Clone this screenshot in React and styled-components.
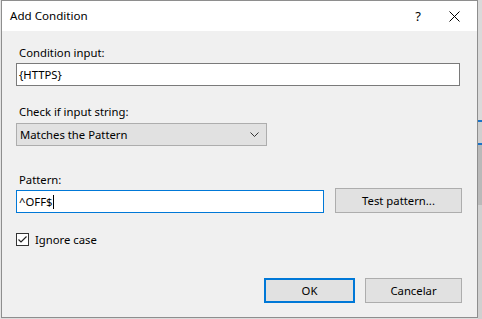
import React from "react";
import styled, { createGlobalStyle } from "styled-components";

const GlobalStyle = createGlobalStyle`
  html, body {
    margin: 0;
    padding: 0;
    background: #dcdcdc;
  }
  body {
    font-family: "Noto Sans", "Open Sans", sans-serif;
    font-size: 11.3px;
    color: #000;
  }
`;

const Screen = styled.div`
  display: flex;
  width: 482px;
  height: 319px;
  overflow: hidden;
`;

const Gutter = styled.div`
  width: 1px;
  background: #e4e4e4;
`;

const Dialog = styled.div`
  width: 477px;
  height: 318px;
  box-sizing: border-box;
  border: 1px solid #8e8e8e;
  background: #f0f0f0;
  display: flex;
  flex-direction: column;
`;

const TitleBar = styled.div`
  height: 30px;
  background: #fff;
  display: flex;
  align-items: center;
  padding-left: 8px;
`;

const Title = styled.div`
  flex: 1;
  font-size: 11.6px;
  padding-bottom: 1px;
`;

const TitleButton = styled.div`
  width: ${(p) => p.w}px;
  height: 30px;
  display: flex;
  align-items: center;
  justify-content: center;
  font-size: 13px;
`;

const Body = styled.div`
  flex: 1;
  padding: 14px 0 0 14px;
  display: flex;
  flex-direction: column;
`;

const Label = styled.div`
  line-height: 16px;
  height: 16px;
  margin-top: ${(p) => p.top || 0}px;
  padding-left: 3px;
`;

const TextInput = styled.div`
  box-sizing: border-box;
  width: ${(p) => p.w}px;
  height: 23px;
  margin-top: 2px;
  background: #fff;
  border: 1px solid ${(p) => (p.focused ? "#0078d7" : "#7a7a7a")};
  display: flex;
  align-items: center;
  padding-left: 2px;
`;

const Caret = styled.span`
  display: inline-block;
  width: 1px;
  height: 14px;
  background: #000;
  margin-left: 1px;
`;

const Select = styled.div`
  box-sizing: border-box;
  width: 251px;
  height: 23px;
  margin-top: 3px;
  background: #e1e1e1;
  border: 1px solid #adadad;
  display: flex;
  align-items: center;
  justify-content: space-between;
  padding: 0 7px 0 3px;
`;

const Row = styled.div`
  display: flex;
  align-items: center;
  gap: ${(p) => p.gap || 0}px;
`;

const Button = styled.div`
  box-sizing: border-box;
  width: ${(p) => p.w}px;
  height: 25px;
  background: #e1e1e1;
  border: ${(p) => (p.primary ? "2px solid #0078d7" : "1px solid #adadad")};
  display: flex;
  align-items: center;
  justify-content: center;
`;

const CheckRow = styled.div`
  display: flex;
  align-items: center;
  gap: 6px;
  margin-top: 19px;
`;

const Box = styled.div`
  box-sizing: border-box;
  width: 13px;
  height: 13px;
  border: 1px solid #333;
  background: #fff;
  display: flex;
  align-items: center;
  justify-content: center;
`;

const Footer = styled.div`
  display: flex;
  gap: 10px;
  margin-top: 31px;
  padding-left: 248px;
`;

const Backdrop = styled.div`
  flex: 1;
  display: flex;
  flex-direction: column;
  background: #d6d6d6;
`;

const Stripe = styled.div`
  height: ${(p) => p.h}px;
  background: ${(p) => p.c};
`;

export default function App() {
  return (
    <>
      <GlobalStyle />
      <Screen>
        <Gutter />
        <Dialog>
          <TitleBar>
            <Title>Add Condition</Title>
            <TitleButton w={26}>?</TitleButton>
            <TitleButton w={46}>
              <svg width="11" height="11" viewBox="0 0 11 11">
                <path d="M0.5 0.5 L10.5 10.5 M10.5 0.5 L0.5 10.5" stroke="#000" strokeWidth="1" />
              </svg>
            </TitleButton>
          </TitleBar>
          <Body>
            <Label>Condition input:</Label>
            <TextInput w={444}>{"{HTTPS}"}</TextInput>
            <Label top={18}>Check if input string:</Label>
            <Select>
              <span>Matches the Pattern</span>
              <svg width="9" height="5" viewBox="0 0 9 5">
                <path d="M0.5 0.5 L4.5 4.5 L8.5 0.5" stroke="#333" strokeWidth="1" fill="none" />
              </svg>
            </Select>
            <Label top={26}>Pattern:</Label>
            <Row gap={11}>
              <TextInput w={308} focused>
                ^OFF$<Caret />
              </TextInput>
              <Button w={127}>Test pattern...</Button>
            </Row>
            <CheckRow>
              <Box>
                <svg width="11" height="11" viewBox="0 0 11 11">
                  <path d="M1.5 5.5 L4 8 L9.5 2.5" stroke="#222" strokeWidth="1.2" fill="none" />
                </svg>
              </Box>
              <span>Ignore case</span>
            </CheckRow>
            <Footer>
              <Button w={91} primary>OK</Button>
              <Button w={97}>Cancelar</Button>
            </Footer>
          </Body>
        </Dialog>
        <Backdrop>
          <Stripe h={120} c="#dadada" />
          <Stripe h={2} c="#1a73c8" />
          <Stripe h={21} c="#cfcfcf" />
          <Stripe h={2} c="#1a73c8" />
          <Stripe h={60} c="#b9b9b9" />
          <Stripe h={114} c="#d0d0d0" />
        </Backdrop>
      </Screen>
    </>
  );
}
